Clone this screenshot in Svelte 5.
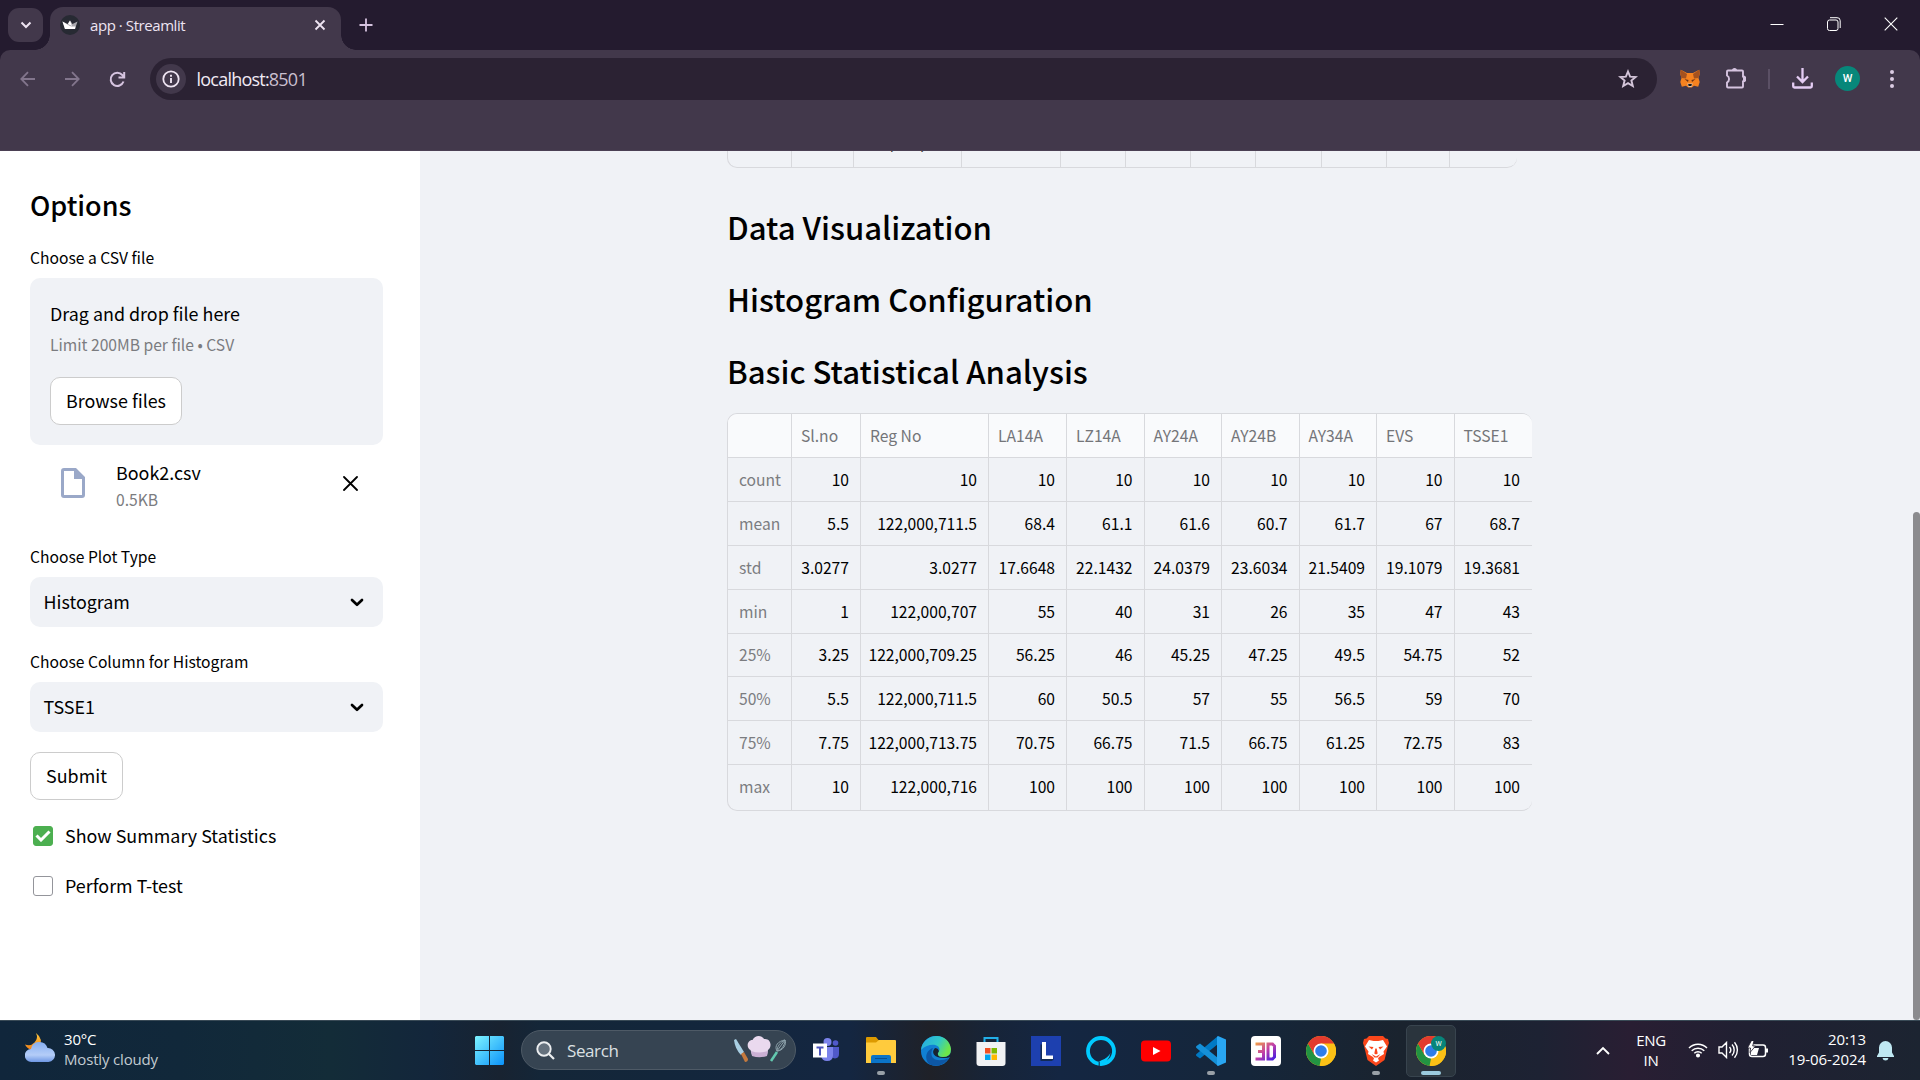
<script>
  const columns = ['', 'Sl.no', 'Reg No', 'LA14A', 'LZ14A', 'AY24A', 'AY24B', 'AY34A', 'EVS', 'TSSE1'];
  const rows = [
    ['count', '10', '10', '10', '10', '10', '10', '10', '10', '10'],
    ['mean', '5.5', '122,000,711.5', '68.4', '61.1', '61.6', '60.7', '61.7', '67', '68.7'],
    ['std', '3.0277', '3.0277', '17.6648', '22.1432', '24.0379', '23.6034', '21.5409', '19.1079', '19.3681'],
    ['min', '1', '122,000,707', '55', '40', '31', '26', '35', '47', '43'],
    ['25%', '3.25', '122,000,709.25', '56.25', '46', '45.25', '47.25', '49.5', '54.75', '52'],
    ['50%', '5.5', '122,000,711.5', '60', '50.5', '57', '55', '56.5', '59', '70'],
    ['75%', '7.75', '122,000,713.75', '70.75', '66.75', '71.5', '66.75', '61.25', '72.75', '83'],
    ['max', '10', '122,000,716', '100', '100', '100', '100', '100', '100', '100']
  ];
  const selects = [
    { label: 'Choose Plot Type', value: 'Histogram' },
    { label: 'Choose Column for Histogram', value: 'TSSE1' }
  ];
</script>

{#snippet chrome()}
  <circle cx="15" cy="15" r="15" fill="#fbc116" />
  <path d="M2 7.500 8.500 18.700 15 22.500 13.500 29.900A15 15 0 0 1 2 7.500z" fill="#229342" />
  <path d="M14 30 21.500 18.800 21 9 28 7.500A15 15 0 0 1 14 30z" fill="#fbc116" />
  <path d="M2 7.500A15 15 0 0 1 28 7.500H15L8.500 18.700z" fill="#e33b2e" />
  <circle cx="15" cy="15" r="7.500" fill="#fff" />
  <circle cx="15" cy="15" r="5.800" fill="#2f7de9" />
{/snippet}

<div class="screen">
  <header class="tabstrip">
    <button class="tabsearch" aria-label="Search tabs">
      <svg width="12" height="8" viewBox="0 0 12 8"><path d="M1.500 1.500 6 6l4.500-4.500" fill="none" stroke="#eee4f2" stroke-width="2" /></svg>
    </button>
    <div class="tab">
      <svg class="favicon" width="20" height="20" viewBox="0 0 20 20">
        <circle cx="10" cy="10" r="10" fill="#272a33" />
        <path d="m2.500 6.500 5 2.500L10 5.500 12.500 9l5-2.500L15 14H5z" fill="#a9a9ae" />
        <path d="m2.500 6.500 6.500 4 6 3.500H5zM10 5.500l2 5.500-4-2z" fill="#fff" />
        <path d="M5 11.500h10.500L15 14H5z" fill="#fff" />
      </svg>
      <span class="tabtitle">app · Streamlit</span>
      <svg class="tabclose" width="12" height="12" viewBox="0 0 12 12"><path d="m1.500 1.500 9 9m0-9-9 9" stroke="#eee4f2" stroke-width="1.800" /></svg>
    </div>
    <svg class="plus" width="14" height="14" viewBox="0 0 14 14"><path d="M7 .5v13M.5 7h13" stroke="#d5c3df" stroke-width="1.800" /></svg>
    <div class="wincontrols">
      <svg width="14" height="14" viewBox="0 0 14 14"><path d="M.5 7.500h13" stroke="#fff" /></svg>
      <svg width="14" height="14" viewBox="0 0 14 14" fill="none" stroke="#fff"><rect x=".5" y="3" width="10.500" height="10.500" rx="2" /><path d="M3 .7h7a3 3 0 0 1 3.200 3V11" /></svg>
      <svg width="14" height="14" viewBox="0 0 14 14"><path d="m.7.7 12.600 12.600m0-12.600L.7 13.300" stroke="#fff" stroke-width="1.100" /></svg>
    </div>
  </header>

  <div class="toolbar">
    <div class="navrow">
      <svg class="back" width="16" height="16" viewBox="0 0 16 16" fill="none" stroke="#82758c" stroke-width="1.800"><path d="M15 8H1.500M8 1.200 1.300 8 8 14.800" /></svg>
      <svg class="forward" width="16" height="16" viewBox="0 0 16 16" fill="none" stroke="#82758c" stroke-width="1.800"><path d="M1 8h13.500M8 1.200 14.700 8 8 14.800" /></svg>
      <svg class="reload" width="17" height="17" viewBox="0 0 17 17" fill="none" stroke="#d6c4e0" stroke-width="2"><path d="M14.500 10.500A6.600 6.600 0 1 1 13.300 4L15 5.800M15.200 1v5.500H9.500" /></svg>
      <div class="omnibox">
        <span class="info">
          <svg width="18" height="18" viewBox="0 0 18 18"><circle cx="9" cy="9" r="7.700" fill="none" stroke="#eee4f2" stroke-width="1.800" /><path d="M9 8v5M9 4.800v1.900" stroke="#eee4f2" stroke-width="1.900" /></svg>
        </span>
        <span class="url">localhost:<i>8501</i></span>
        <svg class="star" width="20" height="20" viewBox="0 0 20 20"><path d="m10 2.500 2.100 5.200 5.500.4-4.200 3.500 1.400 5.500L10 14.200l-4.800 2.900 1.400-5.500L2.400 8.100l5.500-.4z" fill="none" stroke="#d4c5da" stroke-width="1.900" /></svg>
      </div>
      <svg class="fox" width="20" height="20" viewBox="0 0 20 20">
        <path d="M.8.8 7 4h6L19.200.8l.6 4L18.500 9l1.200 4-1.500 4.800-4.200-1-2.200 1.700H8.200L6 16.800l-4.200 1L.3 13l1.200-4L.2 4.800z" fill="#f58220" />
        <path d="M.8.8 7 5 6 9.500 1.500 9 .2 4.800zM19.200.8 13 5l1 4.500 4.500-.5 1.300-4.200z" fill="#a4511f" />
        <path d="m4.500 10 4 1-.5 2zM15.500 10l-4 1 .5 2z" fill="#683216" />
        <path d="M7.200 14.500 8.500 18h3l1.300-3.500z" fill="#d9c4b2" /><path d="M8.200 15h3.600l-.4 2H8.600z" fill="#161616" />
      </svg>
      <svg class="puzzle" width="21" height="21" viewBox="0 0 21 21"><path d="M2 3.500q0-1 1-1h14q1 0 1 1v5a2 2 0 0 1 0 5v5q0 1-1 1H3q-1 0-1-1v-4a4 4 0 0 0 0-7z" fill="none" stroke="#d6c4e0" stroke-width="1.900" /><path d="M7 2.500a2.500 2.500 0 0 1 5 0zM18 8.500a2.500 2.500 0 0 1 0 5z" fill="#d6c4e0" /></svg>
      <span class="divider"></span>
      <svg class="download" width="21" height="21" viewBox="0 0 21 21" fill="none" stroke="#e4ccf3" stroke-width="2.300"><path d="M10.500 0v13M5 8.500l5.500 5.500L16 8.500M1.200 14.500v3.700q0 1.300 1.300 1.300h16q1.300 0 1.300-1.300v-3.700" /></svg>
      <span class="avatar">W</span>
      <svg class="dots" width="4" height="18" viewBox="0 0 4 18" fill="#dbcce3"><circle cx="2" cy="2" r="2" /><circle cx="2" cy="9" r="2" /><circle cx="2" cy="16" r="2" /></svg>
    </div>
  </div>

  <div class="page">
    <aside>
      <h2>Options</h2>
      <p class="label">Choose a CSV file</p>
      <div class="dropzone">
        <span class="drag">Drag and drop file here</span>
        <small>Limit 200MB per file • CSV</small>
        <button class="btn browse">Browse files</button>
      </div>
      <div class="file">
        <svg class="fileicon" width="24" height="30" viewBox="0 0 24 30"><path d="M3 0h12l9 9v18q0 3-3 3H3q-3 0-3-3V3q0-3 3-3zm0 3v24h18V11h-8V3z" fill="#9aa8c8" /></svg>
        <div class="filetext"><span>Book2.csv</span><small>0.5KB</small></div>
        <svg class="remove" width="15" height="15" viewBox="0 0 15 15"><path d="m1 1 13 13m0-13L1 14" stroke="#000" stroke-width="1.800" stroke-linecap="round" /></svg>
      </div>
      {#each selects as s}
        <p class="label">{s.label}</p>
        <div class="select">
          <span>{s.value}</span>
          <svg width="14" height="9" viewBox="0 0 14 9"><path d="m2 2 5 4.800L12 2" fill="none" stroke="#000" stroke-width="2.700" stroke-linecap="round" stroke-linejoin="round" /></svg>
        </div>
      {/each}
      <button class="btn submit">Submit</button>
      <div class="check">
        <span class="box on"><svg width="16" height="12" viewBox="0 0 16 12"><path d="m1.500 5.500 4.500 4.500 8.500-8.500" fill="none" stroke="#fff" stroke-width="3" /></svg></span>
        <span class="checktext">Show Summary Statistics</span>
      </div>
      <div class="check">
        <span class="box"></span>
        <span class="checktext">Perform T-test</span>
      </div>
    </aside>

    <main>
      <div class="previous">
        {#each Array(11) as _, i}
          <span>{#if i === 2}122,000,716{/if}</span>
        {/each}
      </div>
      <h1>Data Visualization</h1>
      <h1>Histogram Configuration</h1>
      <h1>Basic Statistical Analysis</h1>
      <div class="table">
        <div class="row head">
          {#each columns as c}<span>{c}</span>{/each}
        </div>
        {#each rows as r}
          <div class="row">
            {#each r as v}<span>{v}</span>{/each}
          </div>
        {/each}
      </div>
    </main>
    <div class="scrolltrack"><div class="thumb"></div></div>
  </div>

  <footer>
    <svg class="weather" width="30" height="30" viewBox="0 0 30 30">
      <defs><linearGradient id="cloud" x2="0" y2="1"><stop stop-color="#87aef0" /><stop offset=".65" stop-color="#b4cdf8" /><stop offset="1" stop-color="#6e97e4" /></linearGradient>
      <linearGradient id="moon" x2="0" y2="1"><stop stop-color="#ffc83c" /><stop offset="1" stop-color="#f08019" /></linearGradient></defs>
      <path d="M11 0a8.500 8.500 0 0 1-11 11.500A9 9 0 0 0 14 15q5-9-3-15z" fill="url(#moon)" />
      <path d="M6.500 29a6.500 6.500 0 0 1-.5-13 8.500 8.500 0 0 1 16.500-1A7 7 0 0 1 23.500 29z" fill="url(#cloud)" />
    </svg>
    <div class="weathertext"><span>30°C</span><span class="dim">Mostly cloudy</span></div>

    <svg class="start" width="29" height="29" viewBox="0 0 29 29">
      <defs><linearGradient id="win" gradientUnits="userSpaceOnUse" x2="29" y2="29"><stop stop-color="#7df3ff" /><stop offset="1" stop-color="#0b92fa" /></linearGradient></defs>
      <path d="M1 0h13v14H0V1zM15 0h13l1 1v13H15zM0 15h14v14H1l-1-1zM15 15h14v13l-1 1H15z" fill="url(#win)" />
    </svg>
    <div class="search">
      <svg width="19" height="19" viewBox="0 0 19 19"><circle cx="8" cy="8" r="6.700" fill="#65717d" stroke="#eceef0" stroke-width="1.900" /><path d="m13 13 5 5" stroke="#eceef0" stroke-width="2.200" /></svg>
      <span>Search</span>
      <svg class="chef" width="54" height="28" viewBox="0 0 54 28">
        <path d="M1 4 3 3l8 13-3 3Q2 13 1 4z" fill="#a9cfe3" /><path d="m8 18 3-2 4 7q0 3-3 3z" fill="#c57a3e" />
        <path d="M17.500 14C13 12 14 4 19.500 4c2.500-5 9-5 11.500-1 7-1 8.500 8 4 11l-1 5q-7.500 2.500-15 0z" fill="#ead9ee" /><path d="m18 15 1 5q7.500 2.500 15 0l1-5q-8.500 3-17 0z" fill="#cbb0d4" />
        <path d="m38 25 6-9" stroke="#63c9b0" stroke-width="2.500" /><path d="M44 15c-3-5 1-10 8-11 2 4-2 11-8 11zm0 0 8-11m-8 11c0-4 3-9 8-11m-8 11c3 0 8-5 8-11" fill="none" stroke="#8ea3ac" />
      </svg>
    </div>
    <div class="apps">
      <svg viewBox="0 0 30 30"><circle cx="16.500" cy="6" r="4" fill="#7b83eb" /><circle cx="24.500" cy="7" r="2.800" fill="#5059c9" /><path d="M20 11h8v7q0 4-4 4.500-4-.5-4-4z" fill="#5059c9" /><path d="M10 11h12v8q0 6-6 6-5 0-6-5z" fill="#7b83eb" /><path d="M2 7.500h14v14H2z" fill="#fff" /><path d="M5.500 10.500h7v2H10v7H8v-7H5.500z" fill="#4b53bc" /></svg>
      <span class="app running"><svg viewBox="0 0 30 30"><path d="M0 2q0-1 1-1h9l2.500 3H29v10H0z" fill="#dd9a00" /><path d="M0 6.500h10L13 4h16q1 0 1 1v22H0z" fill="#ffcb3d" /><path d="M5 27v-6q0-2 2-2h16q2 0 2 2v6z" fill="#0b74c8" /><path d="M9 22.500h12" stroke="#084f93" /></svg></span>
      <svg viewBox="0 0 30 30">
        <defs><linearGradient id="edge" x2="1" y2=".4"><stop stop-color="#26a7e3" /><stop offset=".6" stop-color="#30c9c8" /><stop offset="1" stop-color="#6de54a" /></linearGradient></defs>
        <circle cx="15" cy="15" r="15" fill="#1080d3" />
        <path d="M12 12c-5 9 2 16 16 10-6 9-15 9-20 6-5-5-3-14 4-16z" fill="#0d57a5" />
        <path d="M17.500 18C19 15 17 12 14 12c-5 5 0 12 14 9.500l2-1.500V15q-1 6-8 6-5 0-4.500-3z" fill="#172332" />
        <path d="M17 17C23 9 9 5 0 14 2-4 28-5 30 13q0 8-8 8-6 0-5-4z" fill="url(#edge)" />
      </svg>
      <svg viewBox="0 0 30 30"><path d="M8.500 7V2h13v5" fill="none" stroke="#22afe8" stroke-width="2" /><path d="M.5 6h29v21q0 3-3 3h-23q-3 0-3-3z" fill="#f1f2f4" /><path d="M9 12h5.500v5.500H9z" fill="#f25022" /><path d="M15.500 12H21v5.500h-5.500z" fill="#7fba00" /><path d="M9 18.500h5.500V24H9z" fill="#00a4ef" /><path d="M15.500 18.500H21V24h-5.500z" fill="#ffb900" /></svg>
      <svg viewBox="0 0 30 30"><path d="M0 0h30v30H0z" fill="#1d40af" /><path d="M9.500 8.500h5v13h8V24l-2 1h-11z" fill="#122b56" /><path d="M11 6h4v13.500h7V23H11z" fill="#fff" /></svg>
      <svg viewBox="0 0 30 30"><circle cx="15" cy="15" r="13" fill="none" stroke="#00caff" stroke-width="3.800" /><path d="M13 30v-3q0-2 2.500-2.800Q22 22 24.500 17 23 26 13 30z" fill="#00caff" /><path d="M13.200 26v4" stroke="#14243d" stroke-width="1" /></svg>
      <svg viewBox="0 0 30 30"><rect y="4.500" width="30" height="21" rx="4" fill="#f00" /><path d="m12 11 7.500 4-7.500 4z" fill="#fff" /></svg>
      <span class="app running"><svg viewBox="0 0 30 30"><path d="M22 0v8L4 22.500.5 20q-1-1 0-2z" fill="#0079c4" /><path d="M22 30v-8L4 7.500.5 10q-1 1 0 2z" fill="#1590d8" /><path d="m22 0 8 3.500v23L22 30l-1-1V1z" fill="#29a6f2" /></svg></span>
      <svg viewBox="0 0 30 30">
        <defs><linearGradient id="d3" x2="1" y2="1"><stop stop-color="#ee9a4a" /><stop offset=".5" stop-color="#c23fa8" /><stop offset="1" stop-color="#4a20e0" /></linearGradient></defs>
        <rect width="30" height="30" rx="4" fill="#fff" /><path d="M4.500 8h8v15h-8M7 15.500h5.500M17 8h4.500l2 2v11l-2 2H17z" fill="none" stroke="url(#d3)" stroke-width="3" />
      </svg>
      <svg viewBox="0 0 30 30">{@render chrome()}</svg>
      <span class="app running"><svg viewBox="0 0 30 30"><path d="M8 0h14l2.500 2.500L27 3l1 4-1 3-3.500 14L15 30 6.500 24 3 10 2 7l1-4 2.500-.5z" fill="#fb471b" /><path d="M8 4l4.500 1h5L22 4l4 6.500-3.500 5L23 18l-5 3-1 1.500 1 2-3 2-3-2 1-2-1-1.500L7 18l.5-2.500-3.500-5z" fill="#fff" /><path d="m7.500 10.500 5 .5-1.500 2.500zM22.500 10.500l-5 .5 1.500 2.500zM14.300 12.500h1.400l1 5-1.700 1-1.700-1zM10.500 18l4.500 2.500 4.500-2.500-3 3.500h-3z" fill="#fb471b" /></svg></span>
      <span class="app running active">
        <svg viewBox="0 0 30 30">{@render chrome()}<circle cx="22.500" cy="7.500" r="7.500" fill="#07857a" /><text x="22.500" y="10" text-anchor="middle" font-size="7" fill="#fff" font-family="Roboto, sans-serif">W</text></svg>
      </span>
    </div>
    <div class="tray">
      <svg class="up" width="14" height="9" viewBox="0 0 14 9"><path d="m1 8 6-6 6 6" fill="none" stroke="#fff" stroke-width="1.900" /></svg>
      <div class="lang"><span>ENG</span><span>IN</span></div>
      <svg class="wifi" width="20" height="16" viewBox="0 0 20 16" fill="none" stroke="#fff" stroke-width="1.500"><path d="M1 6a12.500 12.500 0 0 1 18 0M3.700 8.700a9 9 0 0 1 12.600 0M6.300 11.300a5.300 5.300 0 0 1 7.400 0" /><circle cx="10" cy="13.500" r="1.300" fill="#fff" /></svg>
      <svg class="volume" width="21" height="18" viewBox="0 0 21 18" fill="none" stroke="#fff" stroke-width="1.400"><path d="M1 6h3l4.500-4.500v15L4 12H1zM11.500 6a4.500 4.500 0 0 1 0 6M14 3.500a8 8 0 0 1 0 11M16.500 1.200a12 12 0 0 1 0 15.600" /></svg>
      <svg class="battery" width="21" height="17" viewBox="0 0 21 17"><rect x="1.500" y="4" width="16" height="11.500" rx="2.500" fill="none" stroke="#fff" stroke-width="1.500" /><path d="M18 7.500h2v4h-2zM3 7h8L9 14H3z" fill="#fff" /><path d="M3.500-.5-.5 7h3L2 11.500 7.500 5H4.700L6-.5z" fill="#fff" stroke="#1f1c2c" stroke-width=".8" /></svg>
      <div class="clock"><span>20:13</span><span>19-06-2024</span></div>
      <svg class="bell" width="17" height="20" viewBox="0 0 17 20"><path d="M8.500 0a6.500 6.500 0 0 1 6.500 6.500v5l2 3.500v1H0v-1l2-3.500v-5A6.500 6.500 0 0 1 8.500 0zM5.500 17h6q-.5 2.500-3 2.500t-3-2.500z" fill="#bfe8f2" /></svg>
    </div>
  </footer>
</div>

<style>
  :global(body) { margin: 0; overflow: hidden; }
  .screen { width: 1920px; height: 1080px; display: flex; flex-direction: column; overflow: hidden; font-family: "Noto Sans CJK JP", "Open Sans", sans-serif; color: #000; }
  svg { display: block; flex: none; }
  button { font: inherit; color: inherit; padding: 0; border: 0; }
  span { white-space: nowrap; }

  .tabstrip { height: 50px; flex: none; background: #241b2f; display: flex; align-items: flex-start; font-family: "Open Sans", "Noto Sans", sans-serif; }
  .tabsearch { width: 35px; height: 34px; margin: 8px 7px 0 8px; border-radius: 11px; background: #42384b; display: grid; place-items: center; }
  .tab { width: 291px; height: 43px; margin-top: 7px; border-radius: 13px 13px 0 0; background: #42384b; display: flex; align-items: center; position: relative; box-sizing: border-box; padding: 0 15px 7px 10px; }
  .tab::before, .tab::after { content: ""; position: absolute; bottom: 0; width: 15px; height: 15px; }
  .tab::before { left: -15px; background: radial-gradient(circle at 0 0, transparent 14.500px, #42384b 15px); }
  .tab::after { right: -15px; background: radial-gradient(circle at 100% 0, transparent 14.500px, #42384b 15px); }
  .tabtitle { margin-left: 10px; font-size: 15px; letter-spacing: -0.430px; color: #eee4f2; line-height: 20px; }
  .tabclose { margin-left: auto; }
  .plus { margin: 18px 0 0 18px; }
  .wincontrols { margin: 17px 22px 0 auto; display: flex; gap: 43px; }

  .toolbar { height: 101px; flex: none; background: linear-gradient(#241b2f, #241b2f 10px, transparent 10px); }
  .navrow { height: 101px; box-sizing: border-box; border-bottom: 1px solid #4b4054; border-radius: 10px 10px 0 0; background: #42384b; padding: 8px 26px 50px 20px; display: flex; align-items: center; }
  .forward { margin-left: 28px; }
  .reload { margin-left: 29px; }
  .omnibox { margin-left: 24px; width: 1507px; height: 42px; border-radius: 21px; background: #2b2233; display: flex; align-items: center; box-sizing: border-box; padding: 0 19px 0 6px; flex: none; }
  .info { width: 30px; height: 30px; border-radius: 50%; background: #42384b; display: grid; place-items: center; }
  .url { margin-left: 10.500px; font: 18px/26px "Open Sans", "Noto Sans", sans-serif; letter-spacing: -0.780px; color: #f1eaf4; }
  .url i { font-style: normal; color: #c9bfcf; }
  .star { margin-left: auto; }
  .fox { margin-left: 23px; }
  .puzzle { margin-left: 25px; margin-top: -2px; }
  .divider { width: 2px; height: 20px; margin-left: 22px; background: #5b5065; }
  .download { margin-left: 22px; margin-top: -1px; }
  .avatar { width: 25px; height: 25px; border-radius: 50%; background: #07877a; margin-left: 22px; color: #fff; font: 500 11px/25px Roboto, sans-serif; text-align: center; margin-top: -1px; }
  .dots { margin-left: auto; }

  .page { height: 869px; flex: none; display: flex; background: #f0f2f6; }
  aside { width: 420px; box-sizing: border-box; padding: 36px 37px 0 30px; background: #fff; display: flex; flex-direction: column; font-size: 17.900px; }
  h2 { margin: 0; font-size: 27px; font-weight: 500; line-height: 36px; letter-spacing: -0.030px; }
  .label { margin: 22px 0 7px; font-size: 15.650px; line-height: 26px; }
  .dropzone { height: 167px; box-sizing: border-box; border-radius: 10px; background: #f0f2f6; padding: 22px 20px 20px; display: flex; flex-direction: column; align-items: flex-start; }
  .drag { line-height: 26px; }
  small { font-size: 15.650px; line-height: 24px; color: #7b7c80; }
  .dropzone small { margin-top: 7px; }
  .btn { background: #fff; border: 1px solid #ccc; border-radius: 10px; box-sizing: border-box; height: 48px; flex: none; padding-bottom: 2px; }
  .browse { width: 132px; margin-top: 20px; }
  .submit { width: 93px; margin-top: 20px; margin-bottom: 11px; }
  .file { display: flex; align-items: center; height: 77px; padding: 0 25px 0 31px; }
  .fileicon { margin-bottom: 1px; }
  .filetext { margin-left: 31px; display: flex; flex-direction: column; line-height: 26px; padding-top: 3px; gap: 3px; }
  .remove { margin-left: auto; }
  .select { height: 50px; border-radius: 10px; background: #f0f2f6; display: flex; align-items: center; justify-content: space-between; padding: 0 19px 0 13.500px; }
  .select span, .checktext { padding-bottom: 2px; }
  .check { height: 50px; display: flex; align-items: center; gap: 12px; padding-left: 3px; }
  .box { width: 20px; height: 20px; border: 1px solid #94959b; border-radius: 3px; box-sizing: border-box; display: grid; place-items: center; }
  .on { background: #4caf50; border-color: #4caf50; }

  main { margin-left: 307px; width: 806px; }
  .previous { width: 790px; height: 17px; box-sizing: border-box; border: 1px solid #d8d9dd; border-width: 0 0 1px 1px; border-radius: 0 0 10px 10px; display: grid; grid-template-columns: 64px 62px 108px 99px 65px 65px 65px 66px 65px 63px 1fr; overflow: hidden; font-size: 15.650px; }
  .previous span { border-right: 1px solid #d8d9dd; text-align: right; padding-right: 10px; line-height: 24px; margin-top: -20px; height: 36px; }
  .previous span:last-child { border: 0; }
  h1 { margin: 0; font-size: 31.100px; font-weight: 500; line-height: 42px; height: 72px; }
  .previous + h1 { margin-top: 38px; }
  h1:nth-of-type(3) { height: 63px; }
  .row { display: grid; grid-template-columns: 64px 69px 128px 78px 77.500px 77.500px 77.500px 77.500px 77.500px 1fr; height: 43.750px; font-size: 15.650px; line-height: 43px; }
  .table { width: 805px; height: 398px; box-sizing: border-box; border: 1px solid #d8d9dd; border-right: 0; border-radius: 10px; overflow: hidden; }
  .row span { border-right: 1px solid #d8d9dd; border-bottom: 1px solid #d8d9dd; text-align: right; padding-right: 11px; }
  .row span:last-child { border-right: 0; padding-right: 12px; }
  .row span:first-child { text-align: left; padding: 0 0 0 11px; color: #7b7c80; }
  .row.head { height: 44.250px; background: #f9fafc; line-height: 43px; color: #747579; }
  .row.head span { text-align: left; padding: 0 0 0 9px; }
  .row:last-child { height: 45.500px; }
  .row:last-child span { border-bottom: 0; }
  .scrolltrack { margin-left: auto; width: 7px; padding-top: 361px; }
  .thumb { height: 508px; border-radius: 4px; background: #8b8b8e; }

  footer { height: 60px; flex: none; box-sizing: border-box; border-top: 1px solid #394a56; display: flex; align-items: center; font: 15px/25px "Open Sans", "Noto Sans", sans-serif; color: #fff;
    background: linear-gradient(90deg, #10263b 0, #11283a 180px, #132c38 330px, #13263b 430px, #182331 500px, #142638 540px, #13263b 660px, #142641 850px, #1f2128 930px, #172438 990px, #142642 1060px, #15263a 1250px, #1a232e 1400px, #1d2233 1540px, #291e33 1630px, #202032 1750px, #1c2431 1920px); }
  .weather { margin: -5px 0 0 25px; }
  .weathertext { width: 401px; padding-left: 9px; display: flex; flex-direction: column; line-height: 20px; margin-top: -4px; letter-spacing: -0.170px; }
  .dim { color: #c3cbd1; }
  .start { margin-left: 10px; }
  .search { margin-left: 17px; width: 275px; height: 40px; border-radius: 20px; border: 1px solid #4e5a66; box-sizing: border-box; background: #364452; display: flex; align-items: center; padding: 0 8px 0 14px; flex: none; font-size: 17px; color: #dce0e3; margin-top: -1px; }
  .search span { margin-left: 12px; letter-spacing: -0.400px; }
  .chef { margin-left: auto; }
  .apps { margin-left: 15px; display: flex; gap: 25px; align-items: center; }
  .apps svg { width: 30px; height: 30px; }
  .app { display: block; position: relative; }
  .running::after { content: ""; position: absolute; left: 11px; top: 35px; width: 8px; height: 4px; border-radius: 2px; background: #99a0a7; }
  .active::before { content: ""; position: absolute; inset: -11px -10px; border-radius: 5px; border: 1px solid #38444e; box-sizing: border-box; background: #2a343d; }
  .active svg { position: relative; }
  .active::after { left: 5px; width: 20px; background: #9bcade; }
  .tray { margin-left: auto; display: flex; align-items: center; padding-right: 26px; line-height: 20px; letter-spacing: -0.300px; }
  .lang { width: 50px; margin-left: 16px; display: flex; flex-direction: column; align-items: center; margin-top: -2px; }
  .wifi { margin-left: 12px; margin-top: -1px; }
  .volume { margin-left: 10px; margin-top: -1px; }
  .battery { margin-left: 9px; margin-top: -2px; }
  .clock { width: 97px; display: flex; flex-direction: column; align-items: flex-end; margin-top: -4px; letter-spacing: -0.050px; }
  .bell { margin-left: 11px; }
</style>
